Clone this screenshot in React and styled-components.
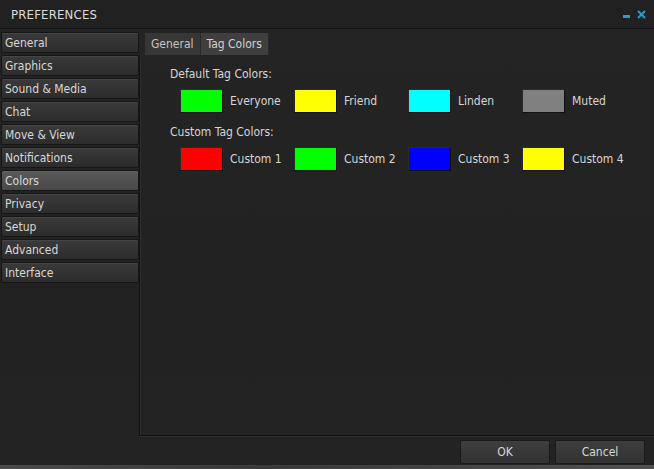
import React from 'react';
import styled, { createGlobalStyle } from 'styled-components';

const colors = {
  bg: '#232323',
  text: '#d6d6d6',
  line: '#141414',
  accent: '#2f9ac4',
};

const GlobalStyle = createGlobalStyle`
  html, body {
    margin: 0;
    padding: 0;
    background: ${colors.bg};
  }
  body {
    font-family: "DejaVu Sans Condensed", "DejaVu Sans", sans-serif;
    font-size: 12px;
    color: ${colors.text};
  }
`;

const Window = styled.div`
  width: 654px;
  height: 469px;
  display: flex;
  flex-direction: column;
  background: linear-gradient(180deg, #242424 0%, #222 60%, #232323 100%);
  overflow: hidden;
`;

const TitleBar = styled.div`
  height: 28px;
  display: flex;
  align-items: center;
  justify-content: space-between;
  padding: 0 8px 0 11px;
  border-bottom: 1px solid ${colors.line};
  background: #212121;
`;

const Title = styled.span`
  font-size: 13px;
  letter-spacing: 0.2px;
  color: #dcdcdc;
`;

const Controls = styled.div`
  display: flex;
  align-items: center;
  gap: 6px;
`;

const Body = styled.div`
  flex: 1;
  display: flex;
  min-height: 0;
`;

const Sidebar = styled.div`
  width: 138px;
  padding: 3px 0 0 1px;
  display: flex;
  flex-direction: column;
  gap: 2px;
`;

const NavButton = styled.div`
  height: 19px;
  line-height: 20px;
  padding: 0 3px;
  border: 1px solid #161616;
  border-radius: 2px;
  color: #d8d8d8;
  background: ${(p) => (p.active
    ? 'linear-gradient(180deg, #5a5a5a 0%, #484848 100%)'
    : 'linear-gradient(180deg, #3a3a3a 0%, #2c2c2c 100%)')};
  box-shadow: inset 0 1px 0 rgba(255, 255, 255, 0.06);
`;

const Content = styled.div`
  flex: 1;
  display: flex;
  flex-direction: column;
`;

const TabStrip = styled.div`
  display: flex;
  padding: 4px 0 0 6px;
`;

const Tab = styled.div`
  height: 22px;
  line-height: 23px;
  padding: 0 6px;
  color: ${(p) => (p.active ? '#d2d2d2' : '#c4c4c4')};
  background: ${(p) => (p.active ? '#3f3f3f' : '#363636')};
  border-right: 1px solid #2a2a2a;
`;

const Panel = styled.div`
  flex: 1;
  border-left: 1px solid #121212;
  border-bottom: 1px solid #121212;
  box-shadow: inset 1px 0 0 #2e2e2e, 0 1px 0 #2e2e2e;
  padding: 11px 0 0 30px;
  display: flex;
  flex-direction: column;
`;

const Heading = styled.div`
  height: 16px;
  line-height: 17px;
  margin-bottom: 7px;
`;

const SwatchRow = styled.div`
  display: flex;
  padding-left: 10px;
  margin-bottom: 11px;
`;

const Cell = styled.div`
  width: 114px;
  display: flex;
  align-items: center;
  gap: 7px;
`;

const Swatch = styled.div`
  width: 41px;
  height: 22px;
  background: ${(p) => p.color};
  border: 1px solid #101010;
  border-top-color: #2a2a2a;
  border-left-color: #2a2a2a;
  flex-shrink: 0;
`;

const Footer = styled.div`
  height: 29px;
  display: flex;
  justify-content: flex-end;
  align-items: flex-start;
  gap: 5px;
  padding: 4px 9px 0 0;
  box-sizing: border-box;
`;

const Button = styled.div`
  width: 88px;
  height: 22px;
  line-height: 23px;
  text-align: center;
  color: #d8d8d8;
  background: linear-gradient(180deg, #3e3e3e 0%, #323232 100%);
  border: 1px solid #1a1a1a;
  border-radius: 2px;
`;

const BottomStrip = styled.div`
  height: 4px;
  background: linear-gradient(90deg, #4a4a4a, #3a3a3a 40%, #505050);
`;

const sections = [
  'General', 'Graphics', 'Sound & Media', 'Chat', 'Move & View', 'Notifications',
  'Colors', 'Privacy', 'Setup', 'Advanced', 'Interface',
];

const defaultTags = [
  { label: 'Everyone', color: '#00ff00' },
  { label: 'Friend', color: '#ffff00' },
  { label: 'Linden', color: '#00ffff' },
  { label: 'Muted', color: '#808080' },
];

const customTags = [
  { label: 'Custom 1', color: '#ff0000' },
  { label: 'Custom 2', color: '#00ff00' },
  { label: 'Custom 3', color: '#0000ff' },
  { label: 'Custom 4', color: '#ffff00' },
];

const TagRow = ({ tags }) => (
  <SwatchRow>
    {tags.map((t) => (
      <Cell key={t.label}>
        <Swatch color={t.color} />
        <span>{t.label}</span>
      </Cell>
    ))}
  </SwatchRow>
);

const App = () => (
  <>
    <GlobalStyle />
    <Window>
      <TitleBar>
        <Title>PREFERENCES</Title>
        <Controls>
          <svg width="9" height="9" viewBox="0 0 9 9">
            <rect x="1" y="5" width="7" height="3" fill={colors.accent} />
          </svg>
          <svg width="9" height="9" viewBox="0 0 9 9">
            <path d="M1 1 L8 8 M8 1 L1 8" stroke={colors.accent} strokeWidth="2" />
          </svg>
        </Controls>
      </TitleBar>
      <Body>
        <Sidebar>
          {sections.map((s) => (
            <NavButton key={s} active={s === 'Colors'}>{s}</NavButton>
          ))}
        </Sidebar>
        <Content>
          <TabStrip>
            <Tab>General</Tab>
            <Tab active>Tag Colors</Tab>
          </TabStrip>
          <Panel>
            <Heading>Default Tag Colors:</Heading>
            <TagRow tags={defaultTags} />
            <Heading>Custom Tag Colors:</Heading>
            <TagRow tags={customTags} />
          </Panel>
        </Content>
      </Body>
      <Footer>
        <Button>OK</Button>
        <Button>Cancel</Button>
      </Footer>
      <BottomStrip />
    </Window>
  </>
);

export default App;
